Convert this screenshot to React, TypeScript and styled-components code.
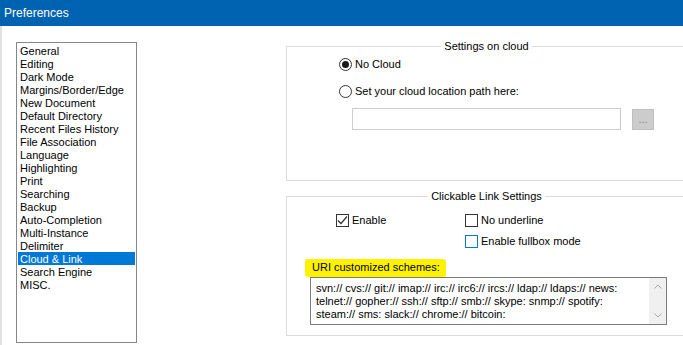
import styled, { createGlobalStyle } from "styled-components";

const GlobalStyle = createGlobalStyle`
  html, body {
    margin: 0;
    padding: 0;
    background: #ffffff;
  }
  body {
    font-family: "Liberation Sans", Arial, sans-serif;
    font-size: 11px;
    color: #000000;
  }
`;

const Window = styled.div`
  width: 683px;
  height: 345px;
  overflow: hidden;
  display: flex;
  flex-direction: column;
  background: #ffffff;
`;
const TitleBar = styled.div`
  flex: none;
  height: 26px;
  padding-left: 4px;
  background: #0063b1;
  color: #ffffff;
  font-size: 12px;
  line-height: 26px;
`;
const Body = styled.div`
  flex: 1;
  min-height: 0;
  display: flex;
  align-items: flex-start;
  padding-left: 14px;
  border-left: 2px solid #e1e1e1;
`;
const CategoryList = styled.ul`
  flex: none;
  list-style: none;
  margin: 16px 0 0;
  padding: 1px;
  width: 121px;
  height: 301px;
  box-sizing: border-box;
  border: 1px solid #828790;
`;
const CategoryItem = styled.li<{ $selected?: boolean }>`
  height: 13px;
  box-sizing: border-box;
  padding: 2px 0 0 2px;
  line-height: 11px;
  white-space: nowrap;
  background: ${(p) => (p.$selected ? "#0078d7" : "transparent")};
  color: ${(p) => (p.$selected ? "#ffffff" : "#000000")};
`;
const Panel = styled.div`
  flex: none;
  width: 401px;
  margin-left: 149px;
  padding-top: 14px;
`;
const GroupBox = styled.fieldset<{ $height: number }>`
  margin: 0;
  padding: 0;
  min-width: 0;
  height: ${(p) => p.$height}px;
  box-sizing: border-box;
  border: 1px solid #dcdcdc;
  & + & {
    margin-top: 9px;
  }
`;
const GroupTitle = styled.legend`
  margin: 0 auto;
  padding: 0 3px;
  font-size: 11px;
  line-height: 13px;
`;
const GroupBody = styled.div<{ $top: number; $left: number }>`
  padding: ${(p) => p.$top}px 0 0 ${(p) => p.$left}px;
`;
const OptionRow = styled.label<{ $gap?: number }>`
  display: flex;
  align-items: center;
  column-gap: 3px;
  height: 13px;
  line-height: 13px;
  margin-top: ${(p) => p.$gap ?? 0}px;
  white-space: nowrap;
`;
const RadioCircle = styled.span<{ $checked?: boolean }>`
  flex: none;
  display: flex;
  align-items: center;
  justify-content: center;
  width: 13px;
  height: 13px;
  box-sizing: border-box;
  border: 1px solid #333333;
  border-radius: 50%;
  &::after {
    content: "";
    display: ${(p) => (p.$checked ? "block" : "none")};
    width: 7px;
    height: 7px;
    border-radius: 50%;
    background: #1a1a1a;
  }
`;
const PathRow = styled.div`
  display: flex;
  align-items: flex-start;
  margin: 10px 0 0 13px;
`;
const PathInput = styled.div`
  width: 269px;
  height: 22px;
  box-sizing: border-box;
  border: 1px solid #cccccc;
`;
const BrowseButton = styled.div`
  width: 22px;
  height: 21px;
  margin: 1px 0 0 11px;
  box-sizing: border-box;
  border: 1px solid #bfbfbf;
  background: #cccccc;
  color: #838383;
  font-size: 11px;
  line-height: 19px;
  text-align: center;
`;
const CheckGrid = styled.div`
  display: grid;
  grid-template-columns: 129px auto;
  row-gap: 8px;
`;
const CheckBox = styled.span<{ $focus?: boolean }>`
  flex: none;
  display: flex;
  align-items: center;
  justify-content: center;
  width: 13px;
  height: 13px;
  box-sizing: border-box;
  border: 1px solid ${(p) => (p.$focus ? "#0078d7" : "#333333")};
  background: #ffffff;
`;
const SchemesLabel = styled.div`
  margin: 11px 0 0 18px;
`;
const Highlight = styled.span`
  display: inline-block;
  height: 18px;
  box-sizing: border-box;
  padding: 0 6px 2px 7px;
  line-height: 16px;
  background: #fff200;
  border-radius: 2px 3px 2px 3px;
`;
const SchemesBox = styled.div`
  display: flex;
  width: 357px;
  height: 48px;
  margin-left: 23px;
  box-sizing: border-box;
  border: 1px solid #7a7a7a;
`;
const SchemesText = styled.div`
  flex: 1;
  padding: 4px 0 0 5px;
  line-height: 13px;
  white-space: nowrap;
`;
const ScrollBar = styled.div`
  flex: none;
  width: 17px;
  display: flex;
  flex-direction: column;
  justify-content: space-between;
  background: #f0f0f0;
`;
const ScrollArrow = styled.div`
  height: 17px;
  display: flex;
  align-items: center;
  justify-content: center;
`;

const categories = [
  "General",
  "Editing",
  "Dark Mode",
  "Margins/Border/Edge",
  "New Document",
  "Default Directory",
  "Recent Files History",
  "File Association",
  "Language",
  "Highlighting",
  "Print",
  "Searching",
  "Backup",
  "Auto-Completion",
  "Multi-Instance",
  "Delimiter",
  "Cloud & Link",
  "Search Engine",
  "MISC.",
];

const schemeLines = [
  "svn:// cvs:// git:// imap:// irc:// irc6:// ircs:// ldap:// ldaps:// news:",
  "telnet:// gopher:// ssh:// sftp:// smb:// skype: snmp:// spotify:",
  "steam:// sms: slack:// chrome:// bitcoin:",
];

function Check({ checked, focus }: { checked?: boolean; focus?: boolean }) {
  return (
    <CheckBox $focus={focus}>
      {checked && (
        <svg width="11" height="11" viewBox="0 0 11 11">
          <path d="M1 5.5 L4 8.5 L10 1.5" fill="none" stroke="#333" strokeWidth="1.2" />
        </svg>
      )}
    </CheckBox>
  );
}

function Chevron({ up }: { up?: boolean }) {
  return (
    <svg width="8" height="5" viewBox="0 0 8 5">
      <path
        d={up ? "M0.5 4.5 L4 1 L7.5 4.5" : "M0.5 0.5 L4 4 L7.5 0.5"}
        fill="none"
        stroke="#a6a6a6"
        strokeWidth="1"
      />
    </svg>
  );
}

export default function App() {
  return (
    <>
      <GlobalStyle />
      <Window>
        <TitleBar>Preferences</TitleBar>
        <Body>
          <CategoryList>
            {categories.map((c) => (
              <CategoryItem key={c} $selected={c === "Cloud & Link"}>
                {c}
              </CategoryItem>
            ))}
          </CategoryList>
          <Panel>
            <GroupBox $height={141}>
              <GroupTitle>Settings on cloud</GroupTitle>
              <GroupBody $top={5} $left={52}>
                <OptionRow>
                  <RadioCircle $checked />
                  No Cloud
                </OptionRow>
                <OptionRow $gap={14}>
                  <RadioCircle />
                  Set your cloud location path here:
                </OptionRow>
                <PathRow>
                  <PathInput />
                  <BrowseButton>...</BrowseButton>
                </PathRow>
              </GroupBody>
            </GroupBox>
            <GroupBox $height={146}>
              <GroupTitle>Clickable Link Settings</GroupTitle>
              <GroupBody $top={11} $left={49}>
                <CheckGrid>
                  <OptionRow>
                    <Check checked />
                    Enable
                  </OptionRow>
                  <OptionRow>
                    <Check />
                    No underline
                  </OptionRow>
                  <span />
                  <OptionRow>
                    <Check focus />
                    Enable fullbox mode
                  </OptionRow>
                </CheckGrid>
              </GroupBody>
              <SchemesLabel>
                <Highlight>URI customized schemes:</Highlight>
              </SchemesLabel>
              <SchemesBox>
                <SchemesText>
                  {schemeLines.map((l) => (
                    <div key={l}>{l}</div>
                  ))}
                </SchemesText>
                <ScrollBar>
                  <ScrollArrow>
                    <Chevron up />
                  </ScrollArrow>
                  <ScrollArrow>
                    <Chevron />
                  </ScrollArrow>
                </ScrollBar>
              </SchemesBox>
            </GroupBox>
          </Panel>
        </Body>
      </Window>
    </>
  );
}
